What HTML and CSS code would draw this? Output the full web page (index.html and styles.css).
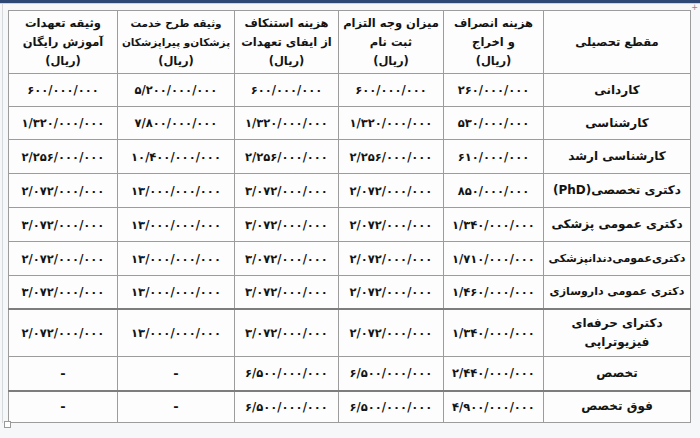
FILE: index.html
```html
<!DOCTYPE html>
<html lang="fa">
<head>
<meta charset="utf-8">
<title>جدول هزینه‌ها</title>
<link rel="stylesheet" href="styles.css">
</head>
<body>
<div class="topbar"></div>
<div class="page">
<div class="frame">
<span class="handle-move">+</span>
<span class="handle-resize"></span>
<table class="fees" dir="rtl">
<colgroup>
<col class="c1"><col class="c2"><col class="c3"><col class="c4"><col class="c5"><col class="c6">
</colgroup>
<thead>
<tr class="h">
<th class="lab">مقطع تحصیلی</th>
<th>هزینه انصراف<br>و اخراج<br>(ریال)</th>
<th>میزان وجه التزام<br>ثبت نام<br>(ریال)</th>
<th>هزینه استنکاف<br>از ایفای تعهدات<br>(ریال)</th>
<th><span class="narrow">وثیقه طرح خدمت<br>پزشکان‌و پیراپزشکان</span><br>(ریال)</th>
<th>وثیقه تعهدات<br>آموزش رایگان<br>(ریال)</th>
</tr>
</thead>
<tbody>
<tr class="r33">
<th>کاردانی</th>
<td>۲۶۰/۰۰۰/۰۰۰</td><td>۶۰۰/۰۰۰/۰۰۰</td><td>۶۰۰/۰۰۰/۰۰۰</td><td>۵/۲۰۰/۰۰۰/۰۰۰</td><td>۶۰۰/۰۰۰/۰۰۰</td>
</tr>
<tr class="r33">
<th>کارشناسی</th>
<td>۵۳۰/۰۰۰/۰۰۰</td><td>۱/۳۲۰/۰۰۰/۰۰۰</td><td>۱/۳۲۰/۰۰۰/۰۰۰</td><td>۷/۸۰۰/۰۰۰/۰۰۰</td><td>۱/۳۲۰/۰۰۰/۰۰۰</td>
</tr>
<tr class="r34">
<th>کارشناسی ارشد</th>
<td>۶۱۰/۰۰۰/۰۰۰</td><td>۲/۲۵۶/۰۰۰/۰۰۰</td><td>۲/۲۵۶/۰۰۰/۰۰۰</td><td>۱۰/۴۰۰/۰۰۰/۰۰۰</td><td>۲/۲۵۶/۰۰۰/۰۰۰</td>
</tr>
<tr class="r34">
<th>دکتری تخصصی(PhD)</th>
<td>۸۵۰/۰۰۰/۰۰۰</td><td>۲/۰۷۲/۰۰۰/۰۰۰</td><td>۳/۰۷۲/۰۰۰/۰۰۰</td><td>۱۳/۰۰۰/۰۰۰/۰۰۰</td><td>۲/۰۷۲/۰۰۰/۰۰۰</td>
</tr>
<tr class="r34">
<th>دکتری عمومی پزشکی</th>
<td>۱/۳۴۰/۰۰۰/۰۰۰</td><td>۲/۰۷۲/۰۰۰/۰۰۰</td><td>۳/۰۷۲/۰۰۰/۰۰۰</td><td>۱۳/۰۰۰/۰۰۰/۰۰۰</td><td>۳/۰۷۲/۰۰۰/۰۰۰</td>
</tr>
<tr class="r34">
<th class="tight">دکتری‌عمومی‌دندانپزشکی</th>
<td>۱/۷۱۰/۰۰۰/۰۰۰</td><td>۲/۰۷۲/۰۰۰/۰۰۰</td><td>۳/۰۷۲/۰۰۰/۰۰۰</td><td>۱۳/۰۰۰/۰۰۰/۰۰۰</td><td>۲/۰۷۲/۰۰۰/۰۰۰</td>
</tr>
<tr class="r33 thick">
<th class="tight">دکتری عمومی داروسازی</th>
<td>۱/۴۶۰/۰۰۰/۰۰۰</td><td>۲/۰۷۲/۰۰۰/۰۰۰</td><td>۳/۰۷۲/۰۰۰/۰۰۰</td><td>۱۳/۰۰۰/۰۰۰/۰۰۰</td><td>۳/۰۷۲/۰۰۰/۰۰۰</td>
</tr>
<tr class="r48">
<th>دکترای حرفه‌ای<br>فیزیوتراپی</th>
<td>۱/۳۴۰/۰۰۰/۰۰۰</td><td>۲/۰۷۲/۰۰۰/۰۰۰</td><td>۳/۰۷۲/۰۰۰/۰۰۰</td><td>۱۳/۰۰۰/۰۰۰/۰۰۰</td><td>۲/۰۷۲/۰۰۰/۰۰۰</td>
</tr>
<tr class="r34 thick">
<th>تخصص</th>
<td>۲/۴۴۰/۰۰۰/۰۰۰</td><td>۶/۵۰۰/۰۰۰/۰۰۰</td><td>۶/۵۰۰/۰۰۰/۰۰۰</td><td class="dash">-</td><td class="dash">-</td>
</tr>
<tr class="r32">
<th>فوق تخصص</th>
<td>۴/۹۰۰/۰۰۰/۰۰۰</td><td>۶/۵۰۰/۰۰۰/۰۰۰</td><td>۶/۵۰۰/۰۰۰/۰۰۰</td><td class="dash">-</td><td class="dash">-</td>
</tr>
</tbody>
</table>
</div>
</div>
</body>
</html>
```
FILE: styles.css
```css
html, body {
  margin: 0;
  padding: 0;
  background: #f6f7f8;
  width: 700px;
  height: 438px;
  overflow: hidden;
}
.topbar {
  height: 3px;
  background: #2d4775;
  border-bottom: 1px solid #c9d3e0;
}
.page {
  padding: 6px 0 0 8px;
  border-left: 1px solid #d6d9dc;
  margin-left: 2px;
  padding-left: 5px;
}
.frame {
  position: relative;
  width: 682px;
}
.handle-move {
  position: absolute;
  right: -8px;
  top: -6px;
  width: 7px;
  height: 7px;
  font: 8px/7px "DejaVu Sans", sans-serif;
  color: #8a8a8a;
  text-align: center;
}
.handle-resize {
  position: absolute;
  left: -4px;
  bottom: -5px;
  width: 5px;
  height: 5px;
  border: 1px solid #9a9a9a;
  background: #fff;
}
.fees {
  border-collapse: collapse;
  table-layout: fixed;
  width: 682px;
  background: #fdfdfd;
  font-family: "DejaVu Sans", sans-serif;
  color: #141414;
  border: 1px solid #8f8f8f;
}
.c1 { width: 147px; }
.c2 { width: 100px; }
.c3 { width: 105px; }
.c4 { width: 104px; }
.c5 { width: 117px; }
.c6 { width: 109px; }
.fees th, .fees td {
  border: 1px solid #9c9c9c;
  text-align: center;
  vertical-align: middle;
  padding: 0;
  white-space: nowrap;
  overflow: hidden;
}
.fees thead th {
  font-size: 11.5px;
  font-weight: bold;
  line-height: 19px;
  letter-spacing: -0.2px;
}
.fees thead th .narrow {
  font-size: 10.5px;
  letter-spacing: -0.4px;
}
.fees tbody th {
  font-size: 12px;
  font-weight: bold;
  line-height: 19px;
}
.fees tbody th.tight {
  font-size: 11px;
  letter-spacing: -0.4px;
}
.fees td {
  font-size: 11.5px;
  font-weight: bold;
  letter-spacing: 0.1px;
}
.fees td.dash {
  font-size: 13px;
}
.h { height: 63px; }
.r32 { height: 32px; }
.r33 { height: 33px; }
.r34 { height: 34px; }
.r48 { height: 48px; }
.thick th, .thick td {
  border-bottom: 2px solid #7d7d7d;
}
```
